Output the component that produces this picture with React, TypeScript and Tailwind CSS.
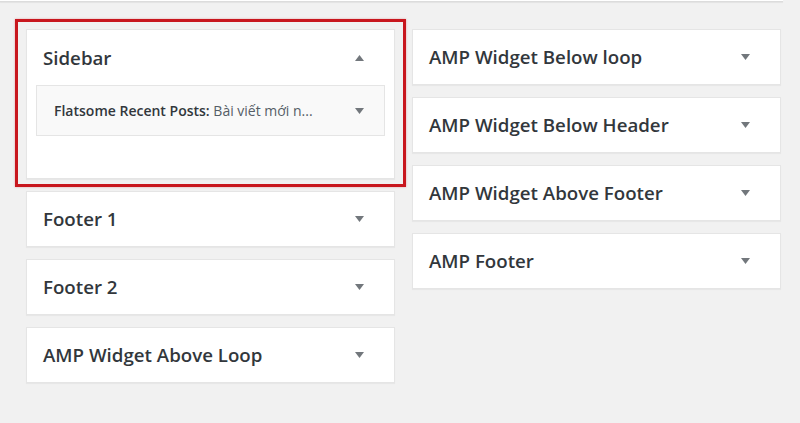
import React from "react";

function Arrow({ up = false }: { up?: boolean }) {
  return (
    <svg width="9" height="6" viewBox="0 0 9 6" className="shrink-0">
      {up ? (
        <polygon points="0,6 9,6 4.5,0" fill="#72777c" />
      ) : (
        <polygon points="0,0 9,0 4.5,6" fill="#72777c" />
      )}
    </svg>
  );
}

function Card({ title }: { title: string }) {
  return (
    <div className="h-[56px] bg-white border border-[#e5e5e5] shadow-[0_1px_1px_rgba(0,0,0,0.04)] flex items-center justify-between pl-[16px] pr-[30px]">
      <span className="text-[18.7px] font-semibold text-[#32373c] pt-[1px]">{title}</span>
      <Arrow />
    </div>
  );
}

export default function App() {
  return (
    <div
      className="w-[800px] h-[423px] bg-[#f1f1f1] overflow-hidden relative"
      style={{ fontFamily: '"Open Sans", "Noto Sans", Arial, sans-serif' }}
    >
      <div className="h-[2px] w-[783px] bg-white border-b border-[#dcdcdc] shadow-[0_1px_1px_rgba(0,0,0,0.06)]" />
      <div className="flex gap-[17px] pl-[26px] pt-[17px]">
        <div className="w-[369px] flex flex-col">
          <div className="-mx-[11px] border-[3px] border-[#c8171e] pt-[7px] pb-[5px] px-[8px] shadow-[0_0_2px_rgba(200,23,30,0.35)]">
            <div className="h-[150px] bg-white border border-[#e5e5e5] shadow-[0_1px_1px_rgba(0,0,0,0.04)] flex flex-col">
              <div className="h-[55px] flex items-center justify-between pl-[16px] pr-[30px]">
                <span className="text-[18.7px] font-semibold text-[#32373c] pt-[1px]">Sidebar</span>
                <Arrow up />
              </div>
              <div className="mx-[9px] h-[51px] bg-[#f9f9f9] border border-[#e5e5e5] flex items-center justify-between pl-[17px] pr-[20px]">
                <span className="text-[14px] text-[#32373c]">
                  <span className="font-semibold">Flatsome Recent Posts:</span>
                  <span className="text-[#555d66]"> Bài viết mới n...</span>
                </span>
                <Arrow />
              </div>
            </div>
          </div>
          <div className="flex flex-col gap-[12px] mt-[4px]">
            <Card title="Footer 1" />
            <Card title="Footer 2" />
            <Card title="AMP Widget Above Loop" />
          </div>
        </div>
        <div className="w-[369px] flex flex-col gap-[12px] mt-[10px]">
          <Card title="AMP Widget Below loop" />
          <Card title="AMP Widget Below Header" />
          <Card title="AMP Widget Above Footer" />
          <Card title="AMP Footer" />
        </div>
      </div>
    </div>
  );
}
